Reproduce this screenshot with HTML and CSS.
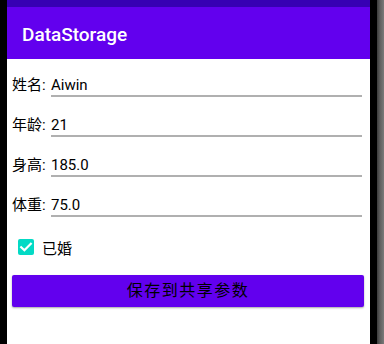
FILE: index.html
```html
<!DOCTYPE html>
<html lang="zh">
<head>
<meta charset="utf-8">
<title>DataStorage</title>
<link rel="stylesheet" href="styles.css">
</head>
<body>
<div class="device">
  <div class="edge-left"></div>
  <div class="screen">
    <div class="status-bar"></div>
    <div class="app-bar">DataStorage</div>
    <div class="content">
      <div class="field">
        <span class="label">姓名:</span>
        <span class="input">Aiwin</span>
      </div>
      <div class="field">
        <span class="label">年龄:</span>
        <span class="input">21</span>
      </div>
      <div class="field">
        <span class="label">身高:</span>
        <span class="input">185.0</span>
      </div>
      <div class="field">
        <span class="label">体重:</span>
        <span class="input">75.0</span>
      </div>
      <div class="check-row">
        <span class="checkbox">
          <svg width="16" height="16" viewBox="0 0 16 16"><path d="M3.2 8.2 L6.4 11.3 L12.8 4.8" fill="none" stroke="#fff" stroke-width="2.2" stroke-linecap="square"/></svg>
        </span>
        <span class="check-label">已婚</span>
      </div>
      <div class="button">保存到共享参数</div>
    </div>
  </div>
  <div class="edge-right"></div>
</div>
</body>
</html>
```

FILE: styles.css
```css
html, body {
  margin: 0;
  padding: 0;
  background: #fff;
}
.device {
  display: flex;
  width: 384px;
  height: 344px;
  overflow: hidden;
}
.edge-left {
  flex: 0 0 7px;
  background: #000;
}
.edge-right {
  flex: 0 0 14px;
  background: linear-gradient(to right, #000 0, #000 7px, #3c3c3c 7px, #5e5e5e 10px, #7a7a7a 14px);
}
.screen {
  flex: 0 0 363px;
  display: flex;
  flex-direction: column;
  background: #fff;
  font-family: Roboto, "Noto Sans CJK SC", sans-serif;
}
.status-bar {
  height: 7px;
  background: #3700b3;
}
.app-bar {
  height: 52px;
  box-sizing: border-box;
  padding: 4px 0 0 15px;
  line-height: 48px;
  background: #6200ee;
  color: #fff;
  font-size: 19px;
  font-weight: 500;
}
.content {
  display: flex;
  flex-direction: column;
  padding: 0 8px 0 5px;
}
.field {
  display: flex;
  align-items: flex-end;
  height: 40px;
  box-sizing: border-box;
  padding-bottom: 2px;
  font-size: 15px;
  line-height: 20px;
  color: #000;
}
.label {
  flex: 0 0 39px;
  padding-bottom: 2px;
  white-space: nowrap;
}
.input {
  flex: 1;
  border-bottom: 2px solid #b0b0b0;
}
.check-row {
  display: flex;
  align-items: center;
  height: 56px;
  padding-left: 6px;
  font-size: 15px;
  color: #000;
}
.checkbox {
  width: 16px;
  height: 16px;
  border-radius: 2px;
  background: #03dac5;
  display: flex;
}
.check-label {
  margin-left: 8px;
}
.button {
  height: 32px;
  margin-right: -2px;
  border-radius: 2px;
  background: #6200ee;
  box-shadow: 0 1px 2px rgba(0, 0, 0, 0.35);
  color: #000;
  font-size: 16px;
  letter-spacing: 1.5px;
  line-height: 32px;
  text-align: center;
}
```
